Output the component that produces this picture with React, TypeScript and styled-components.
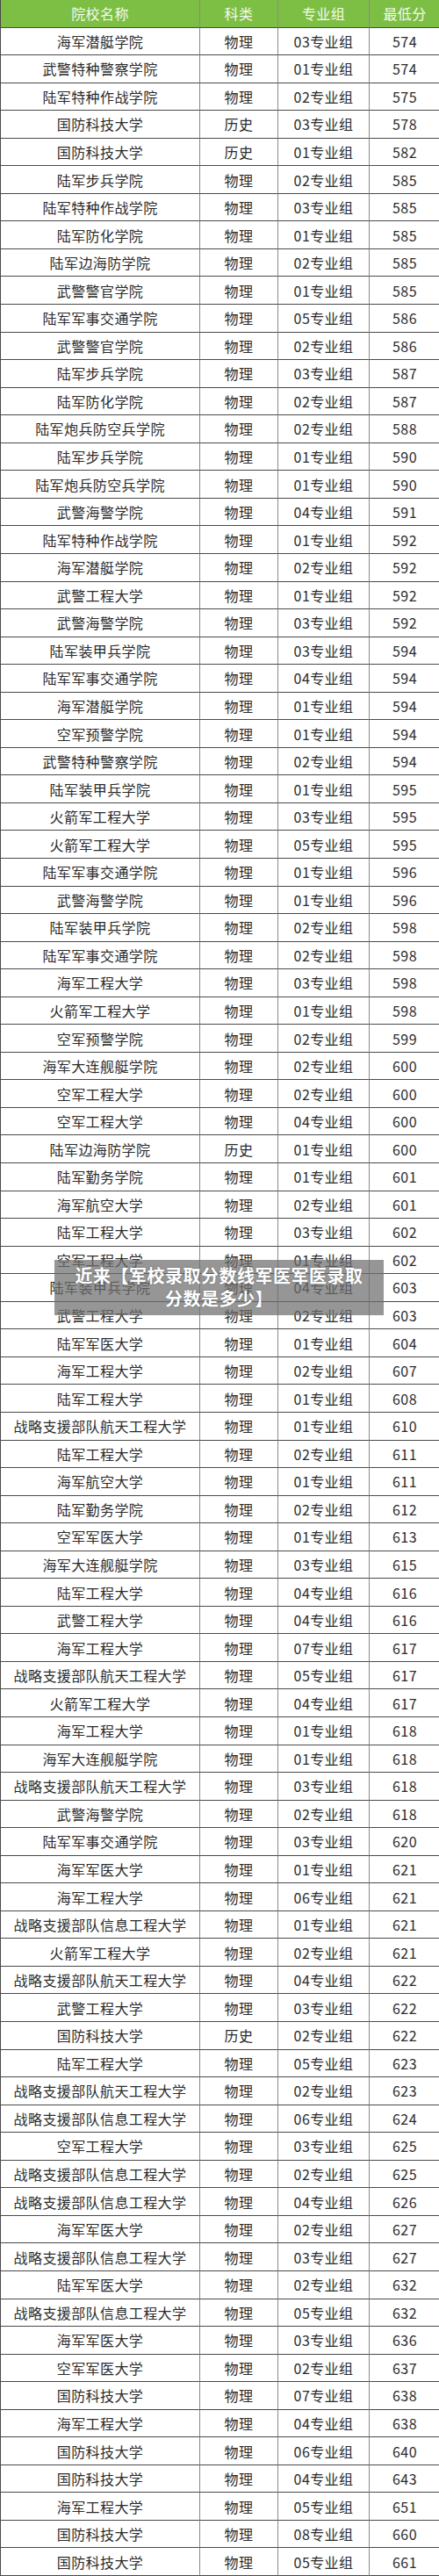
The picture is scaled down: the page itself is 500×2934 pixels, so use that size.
import React from 'react';
import styled, { createGlobalStyle } from 'styled-components';

interface Row {
  name: string;
  subject: string;
  group: string;
  score: number;
}

const GlobalStyle = createGlobalStyle`
  html, body {
    margin: 0;
    padding: 0;
    background: #fff;
  }
  body {
    font-family: "Noto Sans CJK SC", "Noto Sans", sans-serif;
  }
`;

// 院校, 科类(P=物理 H=历史), 专业组, 最低分
const raw: [string, string, string, number][] = [
  ['海军潜艇学院', 'P', '03', 574],
  ['武警特种警察学院', 'P', '01', 574],
  ['陆军特种作战学院', 'P', '02', 575],
  ['国防科技大学', 'H', '03', 578],
  ['国防科技大学', 'H', '01', 582],
  ['陆军步兵学院', 'P', '02', 585],
  ['陆军特种作战学院', 'P', '03', 585],
  ['陆军防化学院', 'P', '01', 585],
  ['陆军边海防学院', 'P', '02', 585],
  ['武警警官学院', 'P', '01', 585],
  ['陆军军事交通学院', 'P', '05', 586],
  ['武警警官学院', 'P', '02', 586],
  ['陆军步兵学院', 'P', '03', 587],
  ['陆军防化学院', 'P', '02', 587],
  ['陆军炮兵防空兵学院', 'P', '02', 588],
  ['陆军步兵学院', 'P', '01', 590],
  ['陆军炮兵防空兵学院', 'P', '01', 590],
  ['武警海警学院', 'P', '04', 591],
  ['陆军特种作战学院', 'P', '01', 592],
  ['海军潜艇学院', 'P', '02', 592],
  ['武警工程大学', 'P', '01', 592],
  ['武警海警学院', 'P', '03', 592],
  ['陆军装甲兵学院', 'P', '03', 594],
  ['陆军军事交通学院', 'P', '04', 594],
  ['海军潜艇学院', 'P', '01', 594],
  ['空军预警学院', 'P', '01', 594],
  ['武警特种警察学院', 'P', '02', 594],
  ['陆军装甲兵学院', 'P', '01', 595],
  ['火箭军工程大学', 'P', '03', 595],
  ['火箭军工程大学', 'P', '05', 595],
  ['陆军军事交通学院', 'P', '01', 596],
  ['武警海警学院', 'P', '01', 596],
  ['陆军装甲兵学院', 'P', '02', 598],
  ['陆军军事交通学院', 'P', '02', 598],
  ['海军工程大学', 'P', '03', 598],
  ['火箭军工程大学', 'P', '01', 598],
  ['空军预警学院', 'P', '02', 599],
  ['海军大连舰艇学院', 'P', '02', 600],
  ['空军工程大学', 'P', '02', 600],
  ['空军工程大学', 'P', '04', 600],
  ['陆军边海防学院', 'H', '01', 600],
  ['陆军勤务学院', 'P', '01', 601],
  ['海军航空大学', 'P', '02', 601],
  ['陆军工程大学', 'P', '03', 602],
  ['空军工程大学', 'P', '01', 602],
  ['陆军装甲兵学院', 'P', '04', 603],
  ['武警工程大学', 'P', '02', 603],
  ['陆军军医大学', 'P', '01', 604],
  ['海军工程大学', 'P', '02', 607],
  ['陆军工程大学', 'P', '01', 608],
  ['战略支援部队航天工程大学', 'P', '01', 610],
  ['陆军工程大学', 'P', '02', 611],
  ['海军航空大学', 'P', '01', 611],
  ['陆军勤务学院', 'P', '02', 612],
  ['空军军医大学', 'P', '01', 613],
  ['海军大连舰艇学院', 'P', '03', 615],
  ['陆军工程大学', 'P', '04', 616],
  ['武警工程大学', 'P', '04', 616],
  ['海军工程大学', 'P', '07', 617],
  ['战略支援部队航天工程大学', 'P', '05', 617],
  ['火箭军工程大学', 'P', '04', 617],
  ['海军工程大学', 'P', '01', 618],
  ['海军大连舰艇学院', 'P', '01', 618],
  ['战略支援部队航天工程大学', 'P', '03', 618],
  ['武警海警学院', 'P', '02', 618],
  ['陆军军事交通学院', 'P', '03', 620],
  ['海军军医大学', 'P', '01', 621],
  ['海军工程大学', 'P', '06', 621],
  ['战略支援部队信息工程大学', 'P', '01', 621],
  ['火箭军工程大学', 'P', '02', 621],
  ['战略支援部队航天工程大学', 'P', '04', 622],
  ['武警工程大学', 'P', '03', 622],
  ['国防科技大学', 'H', '02', 622],
  ['陆军工程大学', 'P', '05', 623],
  ['战略支援部队航天工程大学', 'P', '02', 623],
  ['战略支援部队信息工程大学', 'P', '06', 624],
  ['空军工程大学', 'P', '03', 625],
  ['战略支援部队信息工程大学', 'P', '02', 625],
  ['战略支援部队信息工程大学', 'P', '04', 626],
  ['海军军医大学', 'P', '02', 627],
  ['战略支援部队信息工程大学', 'P', '03', 627],
  ['陆军军医大学', 'P', '02', 632],
  ['战略支援部队信息工程大学', 'P', '05', 632],
  ['海军军医大学', 'P', '03', 636],
  ['空军军医大学', 'P', '02', 637],
  ['国防科技大学', 'P', '07', 638],
  ['海军工程大学', 'P', '04', 638],
  ['国防科技大学', 'P', '06', 640],
  ['国防科技大学', 'P', '04', 643],
  ['海军工程大学', 'P', '05', 651],
  ['国防科技大学', 'P', '08', 660],
  ['国防科技大学', 'P', '05', 661],
];

const rows: Row[] = raw.map(([name, s, g, score]) => ({
  name,
  subject: s === 'H' ? '历史' : '物理',
  group: `${g}专业组`,
  score,
}));

const headers = ['院校名称', '科类', '专业组', '最低分'];

const Page = styled.div`
  position: relative;
  width: 500px;
`;

const Table = styled.div<{ $rows: number }>`
  display: grid;
  grid-template-columns: 226px 89px 104px 81px;
  grid-template-rows: repeat(${({ $rows }) => $rows}, 1fr);
  height: 2934px;
  border-left: 1px solid #4a4a4a;
  border-right: 1px solid #4a4a4a;
  box-sizing: border-box;
`;

const Cell = styled.div<{ $head?: boolean; $first?: boolean }>`
  display: flex;
  align-items: center;
  justify-content: center;
  box-sizing: border-box;
  border-bottom: 1px solid #4a4a4a;
  border-left: ${({ $first }) => ($first ? 'none' : '1px solid #8a8a8a')};
  background: ${({ $head }) => ($head ? '#7dbf45' : '#fff')};
  color: ${({ $head }) => ($head ? '#f4faee' : '#2b2b2b')};
  font-size: 16px;
  letter-spacing: 0.4px;
  white-space: nowrap;
  overflow: hidden;
`;

const Banner = styled.div`
  position: absolute;
  left: 62px;
  top: 1435px;
  width: 375px;
  height: 63px;
  box-sizing: border-box;
  padding: 5px 8px;
  background: rgba(110, 110, 110, 0.72);
  color: #fff;
  font-size: 20px;
  font-weight: 700;
  line-height: 26px;
  text-align: center;
  letter-spacing: 0.5px;
  text-shadow: 0 0 2px rgba(0, 0, 0, 0.3);
`;

export default function App() {
  return (
    <Page>
      <GlobalStyle />
      <Table $rows={rows.length + 1}>
        {headers.map((h, i) => (
          <Cell key={h} $head $first={i === 0}>
            {h}
          </Cell>
        ))}
        {rows.map((r, i) => (
          <React.Fragment key={i}>
            <Cell $first>{r.name}</Cell>
            <Cell>{r.subject}</Cell>
            <Cell>{r.group}</Cell>
            <Cell>{r.score}</Cell>
          </React.Fragment>
        ))}
      </Table>
      <Banner>
        近来【军校录取分数线军医军医录取
        <br />
        分数是多少】
      </Banner>
    </Page>
  );
}
